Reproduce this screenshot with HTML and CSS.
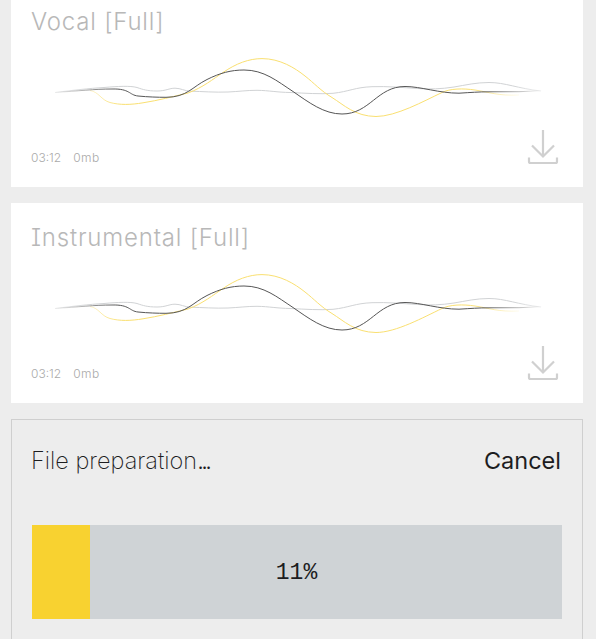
FILE: index.html
```html
<!DOCTYPE html>
<html lang="en">
<head>
    <meta charset="UTF-8">
    <meta name="viewport" content="width=device-width, initial-scale=1.0">
    <title>Stems</title>
    <link rel="stylesheet" href="styles.css">
</head>
<body>
    <svg class="defs" width="0" height="0">
        <defs>
            <linearGradient id="dark" gradientUnits="userSpaceOnUse" x1="54" y1="0" x2="542" y2="0">
                <stop offset="0" stop-color="#555" stop-opacity="0"/>
                <stop offset="0.13" stop-color="#555"/>
                <stop offset="0.88" stop-color="#555"/>
                <stop offset="1" stop-color="#555" stop-opacity="0"/>
            </linearGradient>
            <linearGradient id="yellow" gradientUnits="userSpaceOnUse" x1="88" y1="0" x2="520" y2="0">
                <stop offset="0" stop-color="#f9df70" stop-opacity="0.3"/>
                <stop offset="0.08" stop-color="#f9df70"/>
                <stop offset="0.88" stop-color="#f9df70"/>
                <stop offset="1" stop-color="#f9df70" stop-opacity="0.1"/>
            </linearGradient>
            <linearGradient id="gray" gradientUnits="userSpaceOnUse" x1="54" y1="0" x2="542" y2="0">
                <stop offset="0" stop-color="#d0d2d4" stop-opacity="0.4"/>
                <stop offset="0.08" stop-color="#d0d2d4"/>
                <stop offset="0.94" stop-color="#d0d2d4"/>
                <stop offset="1" stop-color="#d0d2d4" stop-opacity="0.3"/>
            </linearGradient>
            <symbol id="wave" viewBox="31 46 532 80">
                <path stroke="url(#gray)" d="M55 92.5C75 90 88 88.5 104 87.5C118 86.3 130 85.6 137 87.5C143 89.5 147 91 157 91C166 91 169 88.2 175 88.2C181 88.2 184 91 191 91.2C202 91.5 215 92.5 228 92C239 91.5 247 90.3 257 90.3C269 90.5 277 92.3 290 92.5C305 93.2 320 94.3 333 93.3C349 91.6 355 87.3 372 86.7C388 86.1 402 87.6 418 88.5C430 89.4 441 89 454 87C466 85 476 82.5 489 82.5C505 82.5 518 88.5 541 91"/>
                <path stroke="url(#yellow)" d="M90 90.5C99 92 101 100 110 102.5C120 105.2 131 104.8 143 102.8C158 100.5 173 96.5 188 93C203 87.5 213 79 223 72.5C236 63.5 249 58.6 262 58.6C280 58.6 295 68 305 76C314 83 321 91 332 97.5C344 105 355 116.3 376 116.5C396 116.5 424 101 442 92.5C450 88.5 463 88.2 475 90C490 92.3 498 96 519 95"/>
                <path stroke="url(#dark)" d="M55 92.5C79 91 94 89 112 89C130 88.5 129 95 138 96C148 97 158 97.3 166 97.3C187 97.2 192 87 207 79.5C220 73 231 70 244 70C264 70 277 81 293 91.5C309 102.5 324 114 342 114C370 114 377 86.5 405 86.5C421 86.5 439 93.2 459 93.2C471 92.5 478 91.8 490 91.8L519 91.7L542 90.7"/>
            </symbol>
            <symbol id="download" viewBox="0 0 32 36">
                <path d="M16 1V27.5M5 16.5L16 27.5L27 16.5M2 28.5V32.5Q2 34 3.5 34H28.5Q30 34 30 32.5V28.5"/>
            </symbol>
        </defs>
    </svg>
    <main class="stems">
        <section class="card">
            <h2>Vocal [Full]</h2>
            <svg class="wave"><use href="#wave"/></svg>
            <div class="card-footer">
                <p class="meta"><span>03:12</span><span>0mb</span></p>
                <svg class="download"><use href="#download"/></svg>
            </div>
        </section>
        <section class="card">
            <h2>Instrumental [Full]</h2>
            <svg class="wave"><use href="#wave"/></svg>
            <div class="card-footer">
                <p class="meta"><span>03:12</span><span>0mb</span></p>
                <svg class="download"><use href="#download"/></svg>
            </div>
        </section>
        <section class="panel">
            <div class="panel-header">
                <span class="status">File preparation<span class="dots">...</span></span>
                <button class="cancel" type="button">Cancel</button>
            </div>
            <div class="progress">
                <div class="progress-fill" style="width: 11%"></div>
                <span class="progress-label">11%</span>
            </div>
        </section>
    </main>
</body>
</html>
```
FILE: styles.css
```css
* {
    box-sizing: border-box;
}
body {
    margin: 0;
    height: 639px;
    overflow: hidden;
    background: #ededed;
    font-family: Inter, "Liberation Sans", sans-serif;
    color: #1d1d1f;
}
.defs {
    display: block;
}
.stems {
    display: flex;
    flex-direction: column;
    gap: 16px;
    width: 572px;
    margin: -13px 0 0 11px;
}
.card {
    display: flex;
    flex-direction: column;
    height: 200px;
    padding: 20px;
    background: #fff;
}
h2 {
    margin: 0;
    height: 28px;
    line-height: 29px;
    font-size: 24px;
    font-weight: 300;
    letter-spacing: 0.8px;
    color: #b8b8b8;
    white-space: nowrap;
    font-feature-settings: "cv08";
}
.wave {
    width: 532px;
    height: 80px;
    margin-top: 11px;
    fill: none;
    stroke-width: 1;
}
.card-footer {
    display: flex;
    justify-content: space-between;
    margin-top: 3px;
}
.meta {
    display: flex;
    gap: 12px;
    margin: 21px 0 0;
    font-size: 12px;
    line-height: 16px;
    font-weight: 300;
    color: #aaa;
}
.meta span:last-child {
    letter-spacing: 0.5px;
}
.download {
    width: 32px;
    height: 36px;
    margin-right: 4px;
    fill: none;
    stroke: #d0d0d0;
    stroke-width: 2.2;
}
.panel {
    height: 220px;
    padding: 20px 20px 0;
    border: 1px solid #cfcfcf;
    border-bottom: none;
}
.panel-header {
    display: flex;
    justify-content: space-between;
    align-items: center;
    height: 40px;
    padding-right: 1px;
}
.status {
    margin-left: -1px;
    font-size: 23.5px;
    font-weight: 200;
}
.dots {
    font-weight: 300;
    letter-spacing: -2.6px;
}
.cancel {
    padding: 0;
    border: none;
    background: none;
    font: 400 23.5px Inter, "Liberation Sans", sans-serif;
    color: inherit;
}
.progress {
    display: grid;
    height: 94px;
    margin-top: 45px;
    background: #cfd3d6;
}
.progress-fill, .progress-label {
    grid-area: 1 / 1;
}
.progress-fill {
    background: #f8d230;
}
.progress-label {
    place-self: center;
    padding: 1px 1px 0 0;
    font-family: "Liberation Mono", monospace;
    font-size: 23px;
}
```
